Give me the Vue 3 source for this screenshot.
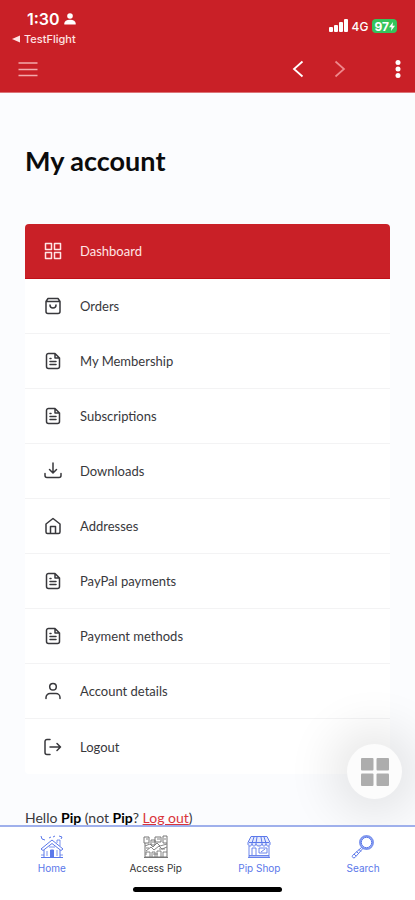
<script setup>
const items = [
  { label: 'Dashboard', icon: 'grid' },
  { label: 'Orders', icon: 'bag' },
  { label: 'My Membership', icon: 'file' },
  { label: 'Subscriptions', icon: 'file' },
  { label: 'Downloads', icon: 'download' },
  { label: 'Addresses', icon: 'home' },
  { label: 'PayPal payments', icon: 'file' },
  { label: 'Payment methods', icon: 'file' },
  { label: 'Account details', icon: 'user' },
  { label: 'Logout', icon: 'logout' },
]

const icons = {
  grid: 'M1.500 1.500h6v6h-6zM10.500 1.500h6v6h-6zM1.500 10.500h6v6h-6zM10.500 10.500h6v6h-6z',
  bag: 'M4 1.500h10l2 3v10a2 2 0 0 1-2 2H4a2 2 0 0 1-2-2v-10zM2.500 4.500h13M6 8c0 4 6 4 6 0',
  file: 'M11 1.500H4.500a2 2 0 0 0-2 2v11a2 2 0 0 0 2 2h9a2 2 0 0 0 2-2V6zM11 1.500V6h4.500M6 6.500h1M6 9.500h6M6 12.500h6',
  download: 'M9 1v9.500M5.500 7.500L9 11l3.500-3.500M1 11.500v2a2 2 0 0 0 2 2h12a2 2 0 0 0 2-2v-2',
  home: 'M2 7L9 1.500 16 7v8a1.500 1.500 0 0 1-1.500 1.500h-11A1.500 1.500 0 0 1 2 15zM6.500 16.500V9.500h5v7',
  user: 'M9 1.500a3.300 3.300 0 1 1 0 6.600a3.300 3.300 0 1 1 0-6.600M2 16.500v-1a4 4 0 0 1 4-4h6a4 4 0 0 1 4 4v1',
  logout: 'M6 1.500H3a2 2 0 0 0-2 2v11a2 2 0 0 0 2 2h3M6 9H16.500M13 5.500l3.500 3.500-3.500 3.500',
}
</script>

<template>
  <div class="app">
    <header class="top">
      <div class="status">
        <div>
          <div class="time">
            1:30
            <svg width="12" height="12" viewBox="0 0 12 12" fill="currentColor" aria-hidden="true">
              <circle cx="6" cy="3" r="2.800" />
              <path d="M0.300 11.500v-1C0.300 8 2.500 6.700 6 6.700s5.700 1.300 5.700 3.800v1z" />
            </svg>
          </div>
          <a class="back-app" href="#">
            <svg width="8" height="8" viewBox="0 0 8 8" fill="currentColor" aria-hidden="true"><path d="M8 0.500v7L0 4z" /></svg>
            TestFlight
          </a>
        </div>
        <div class="signal">
          <svg width="19" height="13" viewBox="0 0 19 13" fill="currentColor" aria-hidden="true">
            <rect x="0" y="8" width="4" height="5" rx="1" />
            <rect x="5" y="6" width="4" height="7" rx="1" />
            <rect x="10" y="3" width="4" height="10" rx="1" />
            <rect x="15" y="0" width="4" height="13" rx="1" />
          </svg>
          <span>4G</span>
          <span class="battery">
            97
            <svg width="6" height="9" viewBox="0 0 6 9" fill="currentColor" aria-hidden="true"><path d="M4 0L0 5.200h2.500L2 9l4-5.200H3.500z" /></svg>
          </span>
        </div>
      </div>
      <nav class="toolbar" aria-label="Browser">
        <button class="menu" type="button" aria-label="Menu">
          <svg width="20" height="16" viewBox="0 0 20 16" fill="none" stroke="#f3a9ab" stroke-width="1.700"><path d="M0.500 2h19M0.500 8.500h19M0.500 14.500h19" /></svg>
        </button>
        <button type="button" aria-label="Back">
          <svg width="12" height="18" viewBox="0 0 12 18" fill="none" stroke="#fff" stroke-width="1.800"><path d="M10.500 1.500L2 9l8.500 7.500" /></svg>
        </button>
        <button class="forward" type="button" aria-label="Forward">
          <svg width="12" height="18" viewBox="0 0 12 18" fill="none" stroke="#ee888c" stroke-width="1.700"><path d="M1.500 1.500L10 9l-8.500 7.500" /></svg>
        </button>
        <button class="more" type="button" aria-label="More">
          <svg width="6" height="20" viewBox="0 0 6 20" fill="#fff"><circle cx="3" cy="3.500" r="2.500" /><circle cx="3" cy="10" r="2.500" /><circle cx="3" cy="16.500" r="2.500" /></svg>
        </button>
      </nav>
    </header>

    <main class="page">
      <h1>My account</h1>
      <nav class="account" aria-label="Account">
        <a v-for="(item, i) in items" :key="item.label" href="#" :class="{ active: i === 0 }">
          <svg width="18" height="18" viewBox="0 0 18 18" fill="none" stroke="currentColor" stroke-width="1.500" stroke-linejoin="round" stroke-linecap="round" aria-hidden="true">
            <path :d="icons[item.icon]" />
          </svg>
          <span>{{ item.label }}</span>
        </a>
      </nav>
      <p>Hello <strong>Pip</strong> (not <strong>Pip</strong>? <a href="#">Log out</a>)</p>
    </main>

    <button class="float" type="button" aria-label="Widgets">
      <svg width="28" height="28" viewBox="0 0 28 28" fill="#adadad">
        <rect width="12.500" height="12.500" rx="1" /><rect x="15.500" width="12.500" height="12.500" rx="1" />
        <rect y="15.500" width="12.500" height="12.500" rx="1" /><rect x="15.500" y="15.500" width="12.500" height="12.500" rx="1" />
      </svg>
    </button>

    <footer class="bottom">
      <nav class="tabs" aria-label="Main">
        <a href="#">
          <svg width="24" height="24" viewBox="0 0 24 24" fill="none" stroke="currentColor" aria-hidden="true">
            <path d="M1 14L12 5l11 9-2 1.500L12 8.500 3 15.500zM4 15v7.500h16V15M1 22.500h22" />
            <path d="M10.500 22v-7h3v7z" fill="currentColor" />
            <path d="M7 16v5M17 15v6M1 20h3M20 20h3M9 12h6M17 8V5h3v6" stroke-width="0.800" />
            <path d="M1 1l1 3 3 1M9 3l2-1M13 2l2-1M19 1l3 1-1 2" />
          </svg>
          <span>Home</span>
        </a>
        <a class="dark" href="#">
          <svg width="26" height="24" viewBox="0 0 26 24" fill="none" stroke="#777" aria-hidden="true">
            <path d="M1 2h5v6H1zM8 5h4v5H8zM12 2h6v5h-6zM20 1h4v7h-4zM2 8v14h22V8M1 22.500h24" />
            <path d="M2 11l5-2 3 3 4-4 3 3 7-2M3 16l5-4 3 3 5-4 3 3 5-2M3 20v-3h4v5M9 22v-5h3v5M14 22v-6h4v6M20 22v-5h4M3 4h2M14 4h3M21 4h2M9 7h3M3 13h3M16 14h6M10 19h5" stroke-width="0.900" />
          </svg>
          <span>Access Pip</span>
        </a>
        <a href="#">
          <svg width="24" height="24" viewBox="0 0 24 24" fill="none" stroke="currentColor" aria-hidden="true">
            <path d="M4 1.500h16l3 6v2c-1 2-3 2-4 0-1 2-3 2-4 0-1 2-5 2-6 0-1 2-3 2-4 0-1 2-3 2-4 0v-2z" fill="#e5eafd" />
            <path d="M7 2L5 8v2M10 2L9 8v2M14 2l1 6v2M17 2l2 6v2M2 7.500h20" />
            <path d="M2 11v11h20V11M1 22.500h22M2 20.500h20M5 20v-7h4v7M12 13h8v5h-8zM14 17l4-3" stroke-width="0.900" />
          </svg>
          <span>Pip Shop</span>
        </a>
        <a href="#">
          <svg width="24" height="24" viewBox="0 0 24 24" fill="none" stroke="currentColor" aria-hidden="true">
            <circle cx="15.500" cy="7.500" r="6.500" stroke-width="2" stroke="#7f96ee" /><circle cx="15.500" cy="7.500" r="5.200" />
            <path d="M10.500 12.500L1.500 20.500c-1 1.500 1 3.200 2.500 2l8-9.200M8 14.500l2 2M5.500 16.500l2 2M3 19l2 2" />
          </svg>
          <span>Search</span>
        </a>
      </nav>
      <div class="handle"></div>
    </footer>
  </div>
</template>

<style>
body { background: #fbfcfe; }
</style>

<style scoped>
* { box-sizing: border-box; }
.app {
  position: relative;
  display: flex;
  flex-direction: column;
  height: 100vh;
  color: #38383c;
  font-family: Lato, sans-serif;
}
a { color: inherit; text-decoration: none; }
button { padding: 0; border: 0; background: none; display: flex; align-items: center; justify-content: center; }
svg { display: block; flex: none; }

.top {
  flex: none;
  padding: 8px 12px 11px;
  background: #c92027;
  border-bottom: 1px solid #dc7478;
  color: #fff;
  font-family: Inter, sans-serif;
}
.status { display: flex; justify-content: space-between; }
.time { display: flex; align-items: center; gap: 4px; padding-left: 15px; font-size: 16px; font-weight: 600; line-height: 22px; }
.back-app { display: flex; align-items: center; gap: 4px; font-size: 11px; font-weight: 500; line-height: 18px; color: #ffe3e3; }
.signal { display: flex; align-items: center; gap: 4px; height: 24px; margin: 6px 6px 0 0; font-size: 12px; font-weight: 500; }
.signal > svg { margin-bottom: 2px; }
.battery { display: flex; align-items: center; height: 14px; padding: 0 2px; border-radius: 4px; background: #35c45b; font-weight: 700; }
.toolbar { display: flex; align-items: center; height: 24px; margin-top: 9px; }
.menu { margin: 0 auto 0 6px; }
.forward { margin-left: 30px; }
.more { margin: 0 2px 0 49px; }

.page { flex: 1; min-height: 0; padding: 48px 25px 0; overflow-y: auto; scrollbar-width: none; }
h1 { margin: 0; color: #0b0b0c; font-size: 27px; line-height: 40px; font-weight: 700; }
.account { margin-top: 43px; border-radius: 4px; overflow: hidden; background: #fff; }
.account a { display: flex; align-items: center; gap: 18px; height: 55px; padding-left: 19px; border-bottom: 1px solid #f3f3f4; font-size: 13px; }
.account a:last-child { border-bottom: 0; }
.account a.active { color: #ffe5e5; background: #c92027; border-color: #c00f17; }
p { margin: 34px 0 0; font-size: 14px; line-height: 20px; }
p strong { color: #000; }
p a { color: #d9343b; text-decoration: underline; }

.float {
  position: absolute;
  right: 13px;
  bottom: 101px;
  width: 55px;
  height: 55px;
  border-radius: 50%;
  background: #fcfcfc;
  box-shadow: 0 0 50px 14px rgba(0, 0, 0, 0.11);
}
.bottom { position: relative; flex: none; padding: 8px 0; background: #fff; border-top: 2px solid #9fb0ec; }
.tabs { display: grid; grid-template-columns: repeat(4, 1fr); }
.tabs a { display: flex; flex-direction: column; align-items: center; color: #5b78ea; font-family: Inter, sans-serif; font-size: 10px; line-height: 18px; }
.tabs .dark { color: #333; }
.handle { width: 36%; height: 5px; margin: 10px auto 0; border-radius: 3px; background: #000; }
</style>
